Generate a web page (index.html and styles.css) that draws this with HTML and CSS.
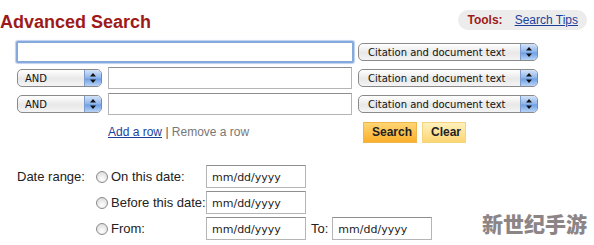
FILE: index.html
```html
<!DOCTYPE html>
<html lang="en">
<head>
    <meta charset="UTF-8">
    <title>Advanced Search</title>
    <link rel="stylesheet" href="styles.css">
</head>
<body>

    <div class="header">
        <h1 class="title">Advanced Search</h1>
        <div class="tools">
            <span class="tools-label">Tools:</span>
            <a href="#" class="link">Search Tips</a>
        </div>
    </div>

    <div class="search-grid">
        <input type="text" class="field field-main">
        <div class="select select-wide"><span>Citation and document text</span><span class="arrow"><svg width="6" height="10" viewBox="0 0 6 10"><path d="M3 0L6 3.5H0z M3 10L6 6.5H0z" fill="#111"/></svg></span></div>

        <div class="select select-op"><span>AND</span><span class="arrow"><svg width="6" height="10" viewBox="0 0 6 10"><path d="M3 0L6 3.5H0z M3 10L6 6.5H0z" fill="#111"/></svg></span></div>
        <input type="text" class="field">
        <div class="select select-wide"><span>Citation and document text</span><span class="arrow"><svg width="6" height="10" viewBox="0 0 6 10"><path d="M3 0L6 3.5H0z M3 10L6 6.5H0z" fill="#111"/></svg></span></div>

        <div class="select select-op"><span>AND</span><span class="arrow"><svg width="6" height="10" viewBox="0 0 6 10"><path d="M3 0L6 3.5H0z M3 10L6 6.5H0z" fill="#111"/></svg></span></div>
        <input type="text" class="field">
        <div class="select select-wide"><span>Citation and document text</span><span class="arrow"><svg width="6" height="10" viewBox="0 0 6 10"><path d="M3 0L6 3.5H0z M3 10L6 6.5H0z" fill="#111"/></svg></span></div>

        <div class="row-links">
            <a href="#" class="link">Add a row</a> <span class="sep">|</span> <span class="muted">Remove a row</span>
        </div>
        <div class="buttons">
            <button class="btn btn-search">Search</button>
            <button class="btn btn-clear">Clear</button>
        </div>
    </div>

    <div class="date-grid">
        <div class="date-label">Date range:</div>

        <label class="radio"><span class="dot"></span>On this date:</label>
        <input type="text" class="field date" value="mm/dd/yyyy">
        <div></div>

        <label class="radio"><span class="dot"></span>Before this date:</label>
        <input type="text" class="field date" value="mm/dd/yyyy">
        <div></div>

        <label class="radio"><span class="dot"></span>From:</label>
        <input type="text" class="field date" value="mm/dd/yyyy">
        <div class="to"><span>To:</span><input type="text" class="field date" value="mm/dd/yyyy"></div>
    </div>

    <div class="watermark">新世纪手游</div>

</body>
</html>
```

FILE: styles.css
```css
/* Base */
body {
    margin: 0;
    font-family: "Liberation Sans", Arial, sans-serif;
    font-size: 13px;
    color: #222;
    background: #fff;
    position: relative;
    height: 245px;
    overflow: hidden;
}

.link {
    color: #1c3f9c;
    text-decoration: underline;
}

/* Header */
.header {
    display: flex;
    justify-content: space-between;
    align-items: center;
    height: 38px;
    padding-right: 7px;
}

.title {
    margin: 0;
    padding-top: 7px;
    font-family: "Liberation Sans", Arial, sans-serif;
    font-size: 18px;
    font-weight: bold;
    color: #9e1a1a;
}

.tools {
    display: flex;
    align-items: center;
    gap: 12px;
    height: 20px;
    margin-top: 1px;
    padding: 0 9px 0 10px;
    background: #ececec;
    border-radius: 10px;
    font-size: 12px;
}

.tools-label {
    font-weight: bold;
    color: #9e1a1a;
}

/* Search rows */
.search-grid {
    display: grid;
    grid-template-columns: 85px 244px 180px;
    grid-auto-rows: 22px;
    column-gap: 6px;
    row-gap: 4px;
    padding-left: 17px;
    margin-top: 3px;
    align-items: center;
}

.field {
    box-sizing: border-box;
    height: 22px;
    margin: 0;
    padding: 2px 5px 0;
    border: 1px solid #b5b5b5;
    border-top-color: #8e8e8e;
    background: #fff;
    font-family: "DejaVu Sans", sans-serif;
    font-size: 11px;
    color: #222;
    outline: none;
}

.field-main {
    grid-column: 1 / 3;
    margin: 0 -2px 0 -1px;
    border: 2px solid #86a9dc;
    border-radius: 2px;
    box-shadow: 0 0 1px 1px #bcd0ee;
}

.select {
    box-sizing: border-box;
    display: flex;
    align-items: center;
    justify-content: space-between;
    height: 18px;
    border: 1px solid #8a8a8a;
    border-radius: 5px;
    background: linear-gradient(#ffffff, #e8e8e8 55%, #f4f4f4);
    font-family: "DejaVu Sans", sans-serif;
    font-size: 10px;
    color: #111;
    overflow: hidden;
}

.select span:first-child {
    padding-left: 9px;
}

.select-op span:first-child {
    padding-left: 7px;
}

.arrow {
    display: flex;
    align-items: center;
    justify-content: center;
    width: 16px;
    height: 100%;
    border-left: 1px solid #7d9ccb;
    background: linear-gradient(#d4e3f8, #8db4ea 50%, #6d9fe6 55%, #b8d2f5);
}

.row-links {
    grid-column: 2;
    font-size: 12px;
    color: #777;
    margin-top: 4px;
}

.sep {
    color: #555;
}

.buttons {
    display: flex;
    gap: 5px;
    margin-left: 5px;
    margin-top: 4px;
}

.btn {
    height: 21px;
    padding: 0 8px;
    border: 1px solid #f0b649;
    font-family: "Liberation Sans", Arial, sans-serif;
    font-size: 12px;
    font-weight: bold;
    color: #222;
}

.btn-search {
    width: 54px;
    background: linear-gradient(#ffd574, #fbb02b);
}

.btn-clear {
    width: 44px;
    border-color: #f3d37c;
    background: linear-gradient(#fff1bd, #fdd673);
}

/* Date range */
.date-grid {
    display: grid;
    grid-template-columns: 79px 110px 100px auto;
    grid-auto-rows: 23px;
    row-gap: 3px;
    padding-left: 17px;
    margin-top: 24px;
    align-items: center;
}

.date-label {
    grid-row: 1;
    grid-column: 1;
}

.radio {
    grid-column: 2;
    display: flex;
    align-items: center;
    gap: 3px;
    white-space: nowrap;
}

.dot {
    box-sizing: border-box;
    width: 12px;
    height: 12px;
    border: 1px solid #8b8b8b;
    border-radius: 50%;
    background: radial-gradient(circle at 50% 70%, #ffffff, #d4d4d4);
}

.date {
    width: 100px;
    height: 23px;
    padding-left: 5px;
}

.to {
    display: flex;
    align-items: center;
    gap: 4px;
    padding-left: 5px;
}

/* Watermark overlay */
.watermark {
    position: absolute;
    right: 7px;
    bottom: 7px;
    font-family: "Noto Sans CJK SC", sans-serif;
    font-size: 21px;
    font-weight: 900;
    color: #8d8585;
}
```
